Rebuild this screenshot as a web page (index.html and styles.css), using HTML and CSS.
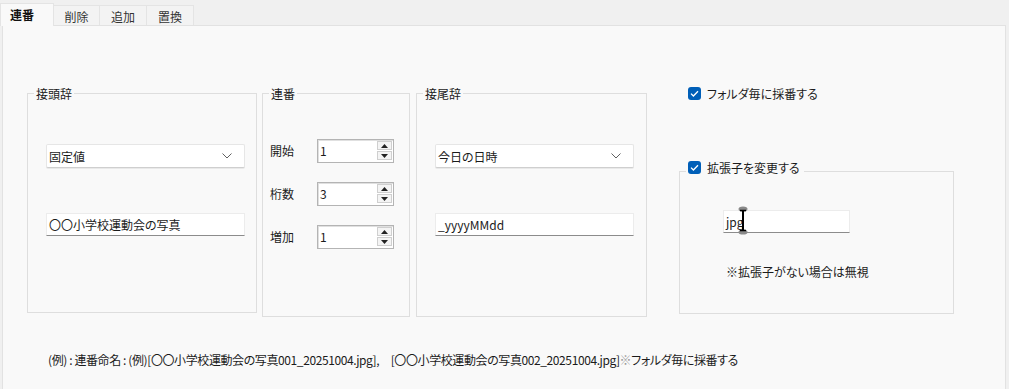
FILE: index.html
```html
<!DOCTYPE html>
<html lang="ja">
<head>
<meta charset="utf-8">
<link rel="stylesheet" href="styles.css">
</head>
<body>
<div class="window">
  <div class="tabs">
    <div class="tab tab-active">連番</div>
    <div class="tab tab-w46">削除</div>
    <div class="tab">追加</div>
    <div class="tab">置換</div>
  </div>
  <div class="panel">
    <div class="row">
      <div class="group g-prefix">
        <span class="legend">接頭辞</span>
        <div class="combo"><span>固定値</span><svg class="chev" width="10" height="6" viewBox="0 0 10 6"><path d="M0.5 0.5 L5 5 L9.5 0.5" fill="none" stroke="#606060" stroke-width="1"/></svg></div>
        <div class="textbox tb-gap">〇〇小学校運動会の写真</div>
      </div>
      <div class="group g-seq">
        <span class="legend">連番</span>
        <div class="spin-row">
          <span class="spin-label">開始</span>
          <div class="spin"><span class="spin-val">1</span><div class="spin-btns"><div class="sb"><svg width="7" height="4" viewBox="0 0 7 4"><path d="M3.5 0 L7 4 L0 4 Z" fill="#222"/></svg></div><div class="sb"><svg width="7" height="4" viewBox="0 0 7 4"><path d="M0 0 L7 0 L3.5 4 Z" fill="#222"/></svg></div></div></div>
        </div>
        <div class="spin-row">
          <span class="spin-label">桁数</span>
          <div class="spin"><span class="spin-val">3</span><div class="spin-btns"><div class="sb"><svg width="7" height="4" viewBox="0 0 7 4"><path d="M3.5 0 L7 4 L0 4 Z" fill="#222"/></svg></div><div class="sb"><svg width="7" height="4" viewBox="0 0 7 4"><path d="M0 0 L7 0 L3.5 4 Z" fill="#222"/></svg></div></div></div>
        </div>
        <div class="spin-row">
          <span class="spin-label">増加</span>
          <div class="spin"><span class="spin-val">1</span><div class="spin-btns"><div class="sb"><svg width="7" height="4" viewBox="0 0 7 4"><path d="M3.5 0 L7 4 L0 4 Z" fill="#222"/></svg></div><div class="sb"><svg width="7" height="4" viewBox="0 0 7 4"><path d="M0 0 L7 0 L3.5 4 Z" fill="#222"/></svg></div></div></div>
        </div>
      </div>
      <div class="group g-suffix">
        <span class="legend">接尾辞</span>
        <div class="combo"><span>今日の日時</span><svg class="chev" width="10" height="6" viewBox="0 0 10 6"><path d="M0.5 0.5 L5 5 L9.5 0.5" fill="none" stroke="#606060" stroke-width="1"/></svg></div>
        <div class="textbox tb-gap">_yyyyMMdd</div>
      </div>
      <div class="rightcol">
        <label class="check-row">
          <span class="checkbox"><svg width="9" height="7" viewBox="0 0 9 7"><path d="M1 3.6 L3.4 6 L8 1.2" fill="none" stroke="#fff" stroke-width="1.3"/></svg></span>
          <span>フォルダ毎に採番する</span>
        </label>
        <div class="group g-ext">
          <label class="check-row legend-check">
            <span class="checkbox"><svg width="9" height="7" viewBox="0 0 9 7"><path d="M1 3.6 L3.4 6 L8 1.2" fill="none" stroke="#fff" stroke-width="1.3"/></svg></span>
            <span>拡張子を変更する</span>
          </label>
          <div class="textbox tb-ext">jpg</div>
          <div class="note">※拡張子がない場合は無視</div>
          <svg class="ibeam" width="12" height="30" viewBox="0 0 12 30">
            <ellipse cx="6" cy="4" rx="4.5" ry="2.6" fill="#8a8a8a"/>
            <ellipse cx="6" cy="27" rx="4.5" ry="2.6" fill="#8a8a8a"/>
            <path d="M3 5.5 H9 M3 25.5 H9" stroke="#000" stroke-width="1.5"/>
            <path d="M6 5 V26" stroke="#000" stroke-width="2"/>
          </svg>
        </div>
      </div>
    </div>
    <div class="example">(例) : 連番命名 : (例)[〇〇小学校運動会の写真001_20251004.jpg],　[〇〇小学校運動会の写真002_20251004.jpg]<span class="mark">※</span>フォルダ毎に採番する</div>
  </div>
</div>
</body>
</html>
```
FILE: styles.css
```css
* { box-sizing: border-box; }
html, body {
  margin: 0;
  padding: 0;
  background: #f0f0f0;
}
body {
  width: 1009px;
  height: 389px;
  overflow: hidden;
  font-family: "Noto Sans CJK JP", "Noto Sans", sans-serif;
  font-size: 12px;
  line-height: 15px;
  color: #1b1b1b;
  font-feature-settings: "palt";
}
.window {
  width: 1009px;
  height: 389px;
}
.tabs {
  display: flex;
  align-items: flex-end;
  height: 25px;
  padding-top: 3px;
}
.tab {
  width: 47px;
  height: 20px;
  background: #f3f3f3;
  border: 1px solid #e4e4e4;
  border-bottom: none;
  border-left: none;
  display: flex;
  align-items: center;
  justify-content: center;
  color: #333;
  padding-top: 1px;
}
.tab-w46 { width: 46px; }
.tab-active {
  width: 54px;
  height: 23px;
  background: #f9f9f9;
  border-left: 1px solid #e4e4e4;
  justify-content: flex-start;
  padding-left: 9px;
  padding-top: 0;
  padding-bottom: 2px;
  margin-bottom: -1px;
  position: relative;
  z-index: 1;
  color: #111;
  font-weight: bold;
}
.panel {
  margin-left: 2px;
  width: 1004px;
  height: 366px;
  background: #f9f9f9;
  border: 1px solid #e2e2e2;
  padding: 60px 0 0 24px;
}
.row {
  display: flex;
  align-items: flex-start;
}
.group {
  position: relative;
  border: 1px solid #dedede;
  margin-top: 7px;
}
.legend {
  position: absolute;
  top: -8px;
  left: 6px;
  padding: 0 2px;
  background: #f9f9f9;
  line-height: 15px;
}
.g-prefix {
  width: 230px;
  height: 220px;
  margin-right: 5px;
  padding: 50px 0 0 18px;
}
.g-seq {
  width: 148px;
  height: 224px;
  margin-right: 6px;
  padding: 45px 0 0 7px;
}
.g-suffix {
  width: 231px;
  height: 224px;
  padding: 50px 0 0 18px;
}
.combo {
  width: 199px;
  height: 24px;
  background: #fff;
  border: 1px solid #e6e6e6;
  border-bottom-color: #cfcfcf;
  border-radius: 2px;
  display: flex;
  align-items: center;
  justify-content: space-between;
  padding: 0 12px 0 2px;
  box-shadow: 0 1px 0 #e9e9e9;
}
.textbox {
  width: 199px;
  height: 23px;
  background: #fff;
  border: 1px solid #ececec;
  border-bottom: 1px solid #8c8c8c;
  display: flex;
  align-items: center;
  padding-left: 2px;
}
.tb-gap { margin-top: 45px; }
.spin-row {
  display: flex;
  align-items: center;
  height: 23px;
  margin-bottom: 20px;
}
.spin-label { width: 47px; }
.spin {
  width: 77px;
  height: 24px;
  background: #fff;
  border: 1px solid #b4b4b4;
  box-shadow: inset 1px 1px 0 #e0e0e0;
  display: flex;
  align-items: center;
  justify-content: space-between;
  padding: 0 1px 0 2px;
}
.spin-btns {
  display: flex;
  flex-direction: column;
  gap: 1px;
}
.sb {
  width: 15px;
  height: 9px;
  background: #f4f4f4;
  border: 1px solid #cfcfcf;
  display: flex;
  align-items: center;
  justify-content: center;
}
.rightcol {
  margin-left: 32px;
  margin-top: 1px;
  display: flex;
  flex-direction: column;
  align-items: flex-start;
}
.check-row {
  display: flex;
  align-items: center;
  gap: 6px;
  height: 13px;
  margin-left: 9px;
}
.checkbox {
  width: 13px;
  height: 13px;
  border-radius: 3px;
  background: #005fb8;
  display: flex;
  align-items: center;
  justify-content: center;
}
.g-ext {
  width: 275px;
  height: 143px;
  margin-top: 71px;
  padding: 38px 0 0 43px;
}
.legend-check {
  position: absolute;
  top: -11px;
  left: 6px;
  margin-left: 0;
  padding: 0 4px 0 2px;
  background: #f9f9f9;
}
.tb-ext { width: 127px; }
.note {
  margin-top: 31px;
  padding-left: 3px;
}
.ibeam {
  position: absolute;
  left: 57px;
  top: 33px;
}
.example {
  margin-top: 35px;
  padding-left: 21px;
  height: 16px;
  letter-spacing: -0.4px;
}
.mark { color: #9a9a9a; }
```
